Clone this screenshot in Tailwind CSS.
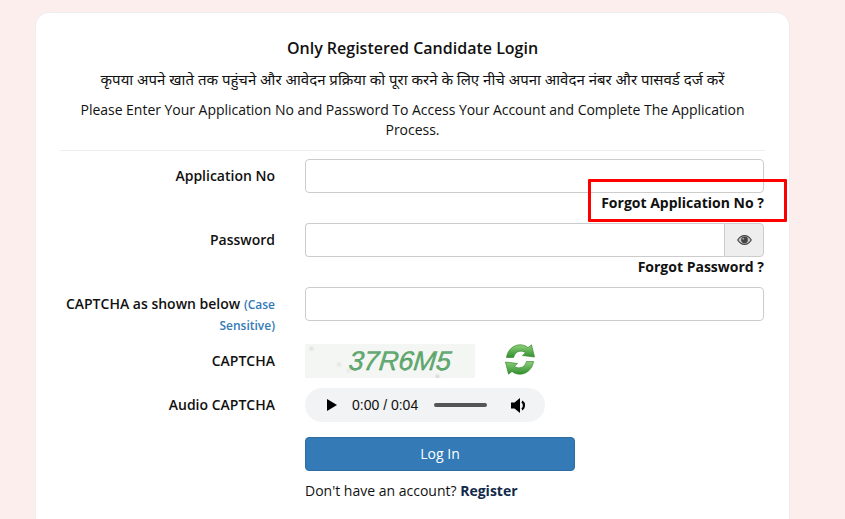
<!DOCTYPE html>
<html lang="hi">
<head>
    <meta charset="UTF-8">
    <meta name="viewport" content="width=device-width, initial-scale=1.0">
    <title>Candidate Login</title>
    <script src="https://cdn.jsdelivr.net/npm/@tailwindcss/browser@4"></script>
</head>
<body class="bg-[#fdeeee] h-[519px] overflow-hidden font-['Open_Sans','Noto_Sans',sans-serif] text-[14px] leading-[20px] text-[#111]">
    <div class="relative ml-[35px] mt-[12px] w-[755px] h-[520px] bg-white border border-[#eee] rounded-[14px] px-[24px] pt-[23px]">
        <!-- Heading -->
        <div class="text-center border-b border-[#eee] pb-[10px]">
            <h1 class="text-[16px] leading-[24px] font-semibold">Only Registered Candidate Login</h1>
            <p class="mt-[8px] text-[15px] leading-[22px]">कृपया अपने खाते तक पहुंचने और आवेदन प्रक्रिया को पूरा करने के लिए नीचे अपना आवेदन नंबर और पासवर्ड दर्ज करें</p>
            <p class="mt-[10px] px-[1px] tracking-[-0.03px]">Please Enter Your Application No and Password To Access Your Account and Complete The Application Process.</p>
        </div>

        <!-- Application No -->
        <div class="flex mt-[8px]">
            <label class="w-[215px] text-right font-semibold pt-[7px]">Application No</label>
            <div class="ml-[30px] w-[459px]">
                <input type="text" class="block w-full h-[34px] border border-[#ccc] rounded-[4px] bg-white">
                <div class="text-right font-bold h-[30px]">Forgot Application No ?</div>
            </div>
        </div>

        <!-- Password -->
        <div class="flex">
            <label class="w-[215px] text-right font-semibold pt-[7px]">Password</label>
            <div class="ml-[30px] w-[459px]">
                <div class="flex h-[34px]">
                    <input type="password" class="flex-1 min-w-0 h-full border border-r-0 border-[#ccc] rounded-l-[4px] bg-white">
                    <span class="w-[40px] flex items-center justify-center bg-[#eee] border border-[#ccc] rounded-r-[4px]">
                        <svg width="15" height="10" viewBox="0 0 15 10"><path fill="#c9c9c9" stroke="#444" stroke-width="1.100" d="M.7 5C2.500 2 4.800.6 7.500.6S12.500 2 14.300 5C12.500 8 10.200 9.400 7.500 9.400S2.500 8 .7 5z"/><circle cx="7.500" cy="4.800" r="3.400" fill="#444"/><circle cx="6.300" cy="3.700" r=".9" fill="#aaa"/></svg>
                    </span>
                </div>
                <div class="text-right font-bold h-[30px]">Forgot Password ?</div>
            </div>
        </div>

        <!-- Captcha input -->
        <div class="flex">
            <label class="w-[215px] text-right font-semibold pt-[7px] leading-[20px]">CAPTCHA as shown below <span class="text-[12px] font-semibold text-[#337ab7]">(Case Sensitive)</span></label>
            <div class="ml-[30px] w-[459px]">
                <input type="text" class="block w-full h-[34px] border border-[#ccc] rounded-[4px] bg-white">
            </div>
        </div>

        <!-- Captcha image -->
        <div class="flex mt-[8px] h-[34px]">
            <label class="w-[215px] text-right font-semibold pt-[7px]">CAPTCHA</label>
            <div class="ml-[30px] flex">
                <div class="relative w-[170px] h-[34px] bg-[#f4f6f3] flex items-center justify-center pl-[21px] overflow-hidden">
                    <span class="inline-block -skew-x-6 font-['Liberation_Sans',sans-serif] italic text-[27px] leading-none text-[#62ad72] [-webkit-text-stroke:0.3px_#2f7a40]">37R6M5</span>
                    <!-- speckle noise of the captcha image -->
                    <i class="absolute left-[5px] top-[3px] w-[3px] h-[3px] rounded-full bg-[#ccc] blur-[1px]"></i>
                    <i class="absolute left-[32px] top-[19px] w-[4px] h-[3px] rounded-full bg-[#ddd] blur-[1px]"></i>
                    <i class="absolute left-[42px] top-[25px] w-[3px] h-[3px] rounded-full bg-[#ddd] blur-[1px]"></i>
                    <i class="absolute left-[131px] top-[31px] w-[3px] h-[3px] rounded-full bg-[#bbb] blur-[1px]"></i>
                </div>
                <svg class="ml-[30px]" width="30" height="31" viewBox="0 0 30 31">
                    <defs>
                        <linearGradient id="g" x1="0" y1="0" x2="0" y2="1"><stop offset="0" stop-color="#8fd07a"/><stop offset="1" stop-color="#2f8f2e"/></linearGradient>
                    </defs>
                    <path fill="url(#g)" stroke="#3c8a34" stroke-width=".7" d="M1.500 13.500C2.500 6 8.500.8 15 .8c3.300 0 6 1 8 2.800L26.500.8 29.500 13 17.500 11.500l3-2.800C18.800 7.500 17 7 15 7.200 11.500 7.500 9.500 10 8.500 13.500z"/>
                    <path fill="url(#g)" stroke="#3c8a34" stroke-width=".7" d="M28.500 17.500C27.500 25 21.500 30.200 15 30.200c-3.300 0-6-1-8-2.800L3.500 30.200.5 18l12 1.500-3 2.800c1.700 1.200 3.500 1.700 5.500 1.500 3.500-.3 5.500-2.800 6.500-6.300z"/>
                </svg>
            </div>
        </div>

        <!-- Audio captcha -->
        <div class="flex mt-[10px]">
            <label class="w-[215px] text-right font-semibold pt-[7px]">Audio CAPTCHA</label>
            <div class="ml-[30px] w-[240px] h-[34px] rounded-full bg-[#f1f3f4] flex items-center font-['Liberation_Sans',sans-serif] text-[14px]">
                <svg class="ml-[22px]" width="10" height="12" viewBox="0 0 10 12"><path fill="#000" d="M0 0l10 6-10 6z"/></svg>
                <span class="ml-[15px] w-[68px] whitespace-nowrap">0:00 / 0:04</span>
                <span class="ml-[14px] w-[53px] h-[4px] rounded-full bg-[#555]"></span>
                <svg class="ml-[24px]" width="17" height="17" viewBox="0 0 17 17"><path fill="#000" d="M0 5.500h3.500L9 1v15l-5.500-4.500H0z"/><path fill="none" stroke="#000" stroke-width="2.200" d="M11 4.500c2.600 1.800 2.600 6.200 0 8"/></svg>
            </div>
        </div>

        <!-- Submit -->
        <div class="ml-[245px] mt-[15px]">
            <button class="block w-[270px] h-[34px] bg-[#337ab7] border border-[#2e6da4] rounded-[4px] text-white">Log In</button>
            <p class="mt-[10px]">Don't have an account? <b class="font-bold text-[#12294a]">Register</b></p>
        </div>

        <!-- Red highlight drawn over the page -->
        <div class="absolute left-[552px] top-[166px] w-[199px] h-[43px] border-[3px] border-[#f00] rounded-[1px]"></div>
    </div>
</body>
</html>
